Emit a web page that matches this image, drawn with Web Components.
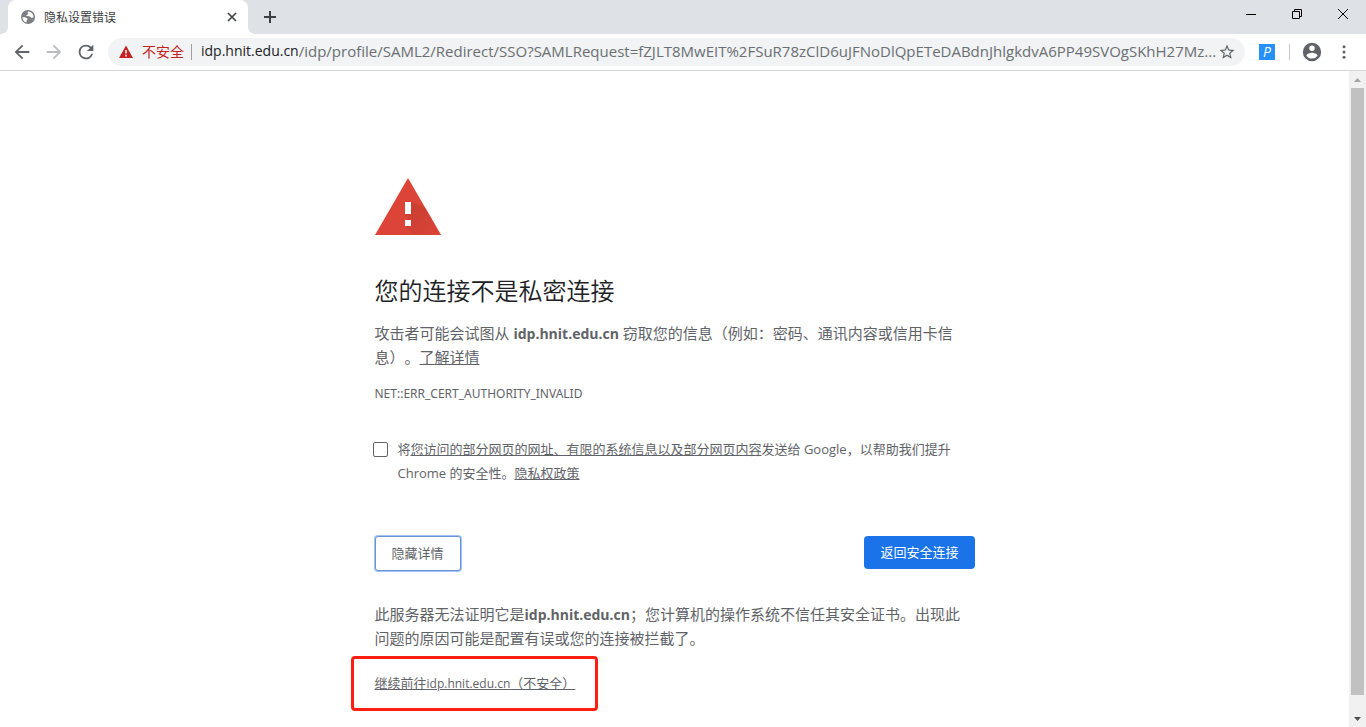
<!DOCTYPE html>
<html lang="zh-CN">
<head>
<meta charset="utf-8">
<title>隐私设置错误</title>
<style>
  body {
    margin: 0;
    background: #fff;
    color: #5f6368;
    font-family: "Open Sans", "Noto Sans CJK SC", sans-serif;
    text-spacing-trim: space-all;
  }
</style>
</head>
<body>
<browser-window>
  <tab-strip slot="top">隐私设置错误</tab-strip>
  <tool-bar slot="top" domain="idp.hnit.edu.cn" path="/idp/profile/SAML2/Redirect/SSO?SAMLRequest=fZJLT8MwEIT%2FSuR78zClD6uJFNoDlQpETeDABdnJhlgkdvA6PP49SVOgSKhH27Mz..."></tool-bar>
  <privacy-error></privacy-error>
  <scroll-bar slot="side"></scroll-bar>
</browser-window>

<script>
class BrowserWindow extends HTMLElement {
  connectedCallback() {
    this.attachShadow({ mode: 'open' });
    this.shadowRoot.innerHTML = `
      <style>
        :host {
          display: flex;
          flex-direction: column;
          height: 100vh;
        }
        .view {
          display: flex;
          flex: 1;
          min-height: 0;
        }
        main {
          flex: 1;
          min-width: 0;
          overflow: hidden;
        }
      </style>
      <slot name="top"></slot>
      <div class="view">
        <main><slot></slot></main>
        <slot name="side"></slot>
      </div>
    `;
  }
}

class TabStrip extends HTMLElement {
  connectedCallback() {
    this.attachShadow({ mode: 'open' });
    this.shadowRoot.innerHTML = `
      <style>
        :host {
          display: flex;
          height: 34px;
          background: #dee1e6;
          padding-left: 8px;
          color: #3c4043;
        }
        .tab {
          position: relative;
          box-sizing: border-box;
          width: 240px;
          display: flex;
          align-items: center;
          gap: 8px;
          padding: 0 8px 0 12px;
          background: #fff;
          border-radius: 8px 8px 0 0;
          font-size: 12px;
        }
        /* curved feet of the active tab */
        .tab::before, .tab::after {
          content: "";
          position: absolute;
          bottom: 0;
          width: 8px;
          height: 8px;
        }
        .tab::before {
          left: -8px;
          background: radial-gradient(circle at 0 0, transparent 8px, #fff 8px);
        }
        .tab::after {
          right: -8px;
          background: radial-gradient(circle at 100% 0, transparent 8px, #fff 8px);
        }
        .title { flex: 1; }
        button {
          display: flex;
          align-items: center;
          justify-content: center;
          border: 0;
          padding: 0;
          background: none;
          color: inherit;
        }
        .close { width: 16px; height: 16px; }
        .new { width: 28px; margin-left: 8px; }
        .controls { display: flex; margin-left: auto; color: #000; }
        .controls button { width: 46px; height: 28px; }
      </style>
      <div class="tab">
        <svg width="16" height="16" viewBox="0 0 16 16">
          <circle cx="8" cy="8" r="7" fill="#7b7e82"/>
          <path d="M2.5 8.2 C4 8 6.4 8.2 7.4 9.4 C8 10.4 6.4 10.8 6.6 12 L6.5 13.6 C4 13 2.4 11 2.5 8.2Z" fill="#fff"/>
          <path d="M8.6 2.5 C7 3 7.2 4.4 8.4 4.6 C8 6 6.2 5.6 6.2 7 C8 7.4 9.6 6.8 10.6 8 C11.2 9.2 12.2 9 13.5 8.2 C13.5 5.2 11.4 2.8 8.6 2.5Z" fill="#fff"/>
        </svg>
        <span class="title"><slot></slot></span>
        <button class="close" aria-label="关闭标签页">
          <svg width="10" height="10" viewBox="0 0 10 10" stroke="currentColor" stroke-width="1.600"><path d="M1 1l8 8M9 1l-8 8"/></svg>
        </button>
      </div>
      <button class="new" aria-label="新标签页">
        <svg width="12" height="12" viewBox="0 0 12 12" stroke="currentColor" stroke-width="2"><path d="M6 0v12M0 6h12"/></svg>
      </button>
      <div class="controls">
        <button aria-label="最小化">
          <svg width="10" height="10" viewBox="0 0 10 10"><path d="M0 5h10v1H0z"/></svg>
        </button>
        <button aria-label="还原">
          <svg width="10" height="10" viewBox="0 0 10 10" fill="none" stroke="#000"><path d="M.5 2.5h7v7h-7zM2.5 2V.5h7v7H8"/></svg>
        </button>
        <button aria-label="关闭">
          <svg width="10" height="10" viewBox="0 0 10 10" stroke="#000"><path d="M0 0l10 10M10 0L0 10"/></svg>
        </button>
      </div>
    `;
  }
}

class ToolBar extends HTMLElement {
  connectedCallback() {
    this.attachShadow({ mode: 'open' });
    this.shadowRoot.innerHTML = `
      <style>
        :host {
          display: flex;
          align-items: center;
          height: 36px;
          padding: 0 8px;
          background: #fff;
          border-bottom: 1px solid #d5d7da;
          color: #5f6368;
        }
        svg { fill: currentColor; flex: none; }
        button {
          display: flex;
          align-items: center;
          justify-content: center;
          width: 28px;
          height: 28px;
          border: 0;
          padding: 0;
          background: none;
          color: inherit;
        }
        nav, .menu { display: flex; gap: 4px; }
        .forward { color: #babcbe; }
        .omnibox {
          flex: 1;
          min-width: 0;
          display: flex;
          align-items: center;
          height: 28px;
          margin: 0 8px;
          padding: 0 9px 0 10px;
          border-radius: 14px;
          background: #f1f3f4;
          font-size: 14px;
        }
        .warning { color: #c5221f; }
        .state {
          margin-left: 8px;
          padding-right: 7px;
          border-right: 1px solid #9aa0a6;
          line-height: 16px;
          color: #c5221f;
        }
        label, input {
          font: 15px/20px "Open Sans", sans-serif;
          padding: 0 0 2px;
        }
        label {
          margin-left: 9px;
          font-size: 14px;
          color: #202124;
        }
        input {
          flex: 1;
          min-width: 0;
          border: 0;
          outline: 0;
          background: none;
          color: #6b6f73;
        }
        .star { width: 18px; }
        .extension {
          width: 16px;
          height: 16px;
          background: #2490f8;
          color: #fff;
          font: italic 14px/16px "Open Sans", sans-serif;
          text-align: center;
        }
        .rule {
          width: 1px;
          height: 16px;
          margin: 0 8px;
          background: #c8cacd;
        }
      </style>
      <nav>
        <button aria-label="后退"><svg width="22" height="22" viewBox="0 0 24 24"><path d="M20 11H7.83l5.59-5.59L12 4l-8 8 8 8 1.41-1.41L7.83 13H20z"/></svg></button>
        <button class="forward" aria-label="前进"><svg width="22" height="22" viewBox="0 0 24 24"><path d="M12 4l-1.41 1.41L16.17 11H4v2h12.17l-5.58 5.59L12 20l8-8z"/></svg></button>
        <button aria-label="重新加载"><svg width="22" height="22" viewBox="0 0 24 24"><path d="M17.65 6.35A7.96 7.96 0 0 0 12 4a8 8 0 1 0 7.73 10h-2.08A6 6 0 1 1 12 6c1.66 0 3.14.69 4.22 1.78L13 11h7V4z"/></svg></button>
      </nav>
      <div class="omnibox">
        <svg class="warning" width="16" height="16" viewBox="0 0 16 16"><path fill-rule="evenodd" d="M8 1.500L15 14H1zM7.200 6v3.500h1.600V6zM7.200 10.800v1.600h1.600v-1.600z"/></svg>
        <span class="state">不安全</span>
        <label for="url">${this.getAttribute('domain')}</label>
        <input id="url" type="text" value="${this.getAttribute('path')}">
        <button class="star" aria-label="收藏"><svg width="18" height="18" viewBox="0 0 24 24"><path d="M22 9.240l-7.190-.62L12 2 9.190 8.630 2 9.240l5.460 4.730L5.820 21 12 17.270 18.180 21l-1.630-7.030zM12 15.400l-3.760 2.270 1-4.280-3.320-2.880 4.380-.38L12 6.100l1.710 4.040 4.380.38-3.320 2.880 1 4.280z"/></svg></button>
      </div>
      <button aria-label="扩展程序"><span class="extension">P</span></button>
      <span class="rule"></span>
      <div class="menu">
        <button aria-label="用户"><svg width="22" height="22" viewBox="0 0 24 24"><path d="M12 2a10 10 0 1 0 0 20 10 10 0 0 0 0-20zm0 3a3 3 0 1 1 0 6 3 3 0 0 1 0-6zm0 14.200a7.200 7.200 0 0 1-6-3.220c.03-1.990 4-3.080 6-3.080 1.990 0 5.970 1.090 6 3.080a7.200 7.200 0 0 1-6 3.220z"/></svg></button>
        <button aria-label="菜单"><svg width="18" height="18" viewBox="0 0 24 24"><circle cx="12" cy="5" r="2"/><circle cx="12" cy="12" r="2"/><circle cx="12" cy="19" r="2"/></svg></button>
      </div>
    `;
  }
}

class ScrollBar extends HTMLElement {
  connectedCallback() {
    this.attachShadow({ mode: 'open' });
    this.shadowRoot.innerHTML = `
      <style>
        :host {
          display: flex;
          flex-direction: column;
          width: 17px;
          background: #f1f1f1;
        }
        svg { display: block; flex: none; }
        .track { flex: 1; padding: 0 2px; }
        .thumb { height: calc(100% - 15px); background: #c1c1c1; }
      </style>
      <svg width="17" height="17" viewBox="0 0 17 17"><path d="M5 11h7L8.500 7z" fill="#a3a3a3"/></svg>
      <div class="track"><div class="thumb"></div></div>
      <svg width="17" height="17" viewBox="0 0 17 17"><path d="M5 7h7l-3.500 4z" fill="#505050"/></svg>
    `;
  }
}

class PrivacyError extends HTMLElement {
  connectedCallback() {
    this.attachShadow({ mode: 'open' });
    this.shadowRoot.innerHTML = `
      <style>
        :host {
          display: block;
          box-sizing: border-box;
          max-width: 600px;
          margin: 0 auto;
          padding-top: 92px;
          font-size: 15px;
          line-height: 24px;
        }
        .icon { display: block; margin-bottom: 40px; }
        h1 {
          margin: 0 0 14px;
          font-size: 24px;
          font-weight: 350;
          line-height: 32px;
          color: #202124;
        }
        p { margin: 0; }
        strong { font-size: 14px; line-height: 1; }
        a { color: inherit; text-decoration: underline; }
        .small { font-size: 13px; }
        .code { margin-top: 13px; font-family: "Noto Sans", sans-serif; font-size: 12px; }
        .report {
          display: flex;
          gap: 10px;
          margin-top: 31px;
        }
        .report input {
          appearance: none;
          flex: none;
          box-sizing: border-box;
          width: 15px;
          height: 15px;
          margin: 5px 0 0 -2px;
          border: 1px solid #5f6368;
          border-radius: 2px;
          background: #fff;
        }
        .buttons {
          display: flex;
          justify-content: space-between;
          align-items: flex-start;
          margin: 51px 0 31px;
        }
        button {
          padding: 0 16px;
          border: 0;
          border-radius: 4px;
          font: inherit;
          font-size: 13px;
          line-height: 33px;
        }
        .details {
          border: 1px solid #6a93d4;
          border-radius: 3px;
          background: #fff;
          color: #5f6368;
          box-shadow: 0 0 0 1px #a3c3f8;
        }
        .safe { background: #1a73e8; color: #fff; }
        .proceed {
          position: relative;
          width: fit-content;
          margin-top: 21px;
        }
        .host { font-size: 12px; line-height: 1; }
        /* red marker round the proceed link */
        .proceed::after {
          content: "";
          position: absolute;
          inset: -15px -23px -16px -24px;
          border: 3px solid #ff1f10;
          border-radius: 4px;
          pointer-events: none;
        }
      </style>
      <svg class="icon" width="72" height="72" viewBox="0 0 72 72">
        <defs>
          <linearGradient id="shade" x1="0" y1="0" x2="1" y2="1">
            <stop offset="0" stop-color="#b93a2f"/>
            <stop offset="1" stop-color="#db4437"/>
          </linearGradient>
        </defs>
        <path d="M33 15L66 72H0z" fill="#db4437"/>
        <path d="M36 39l14.500 6L66 72H39.500L30 63l5-5-5-7z" fill="url(#shade)" opacity=".6"/>
        <path d="M30 39h6v12h-6zM30 57h6v6h-6z" fill="#fff"/>
      </svg>
      <h1>您的连接不是私密连接</h1>
      <p>攻击者可能会试图从 <strong>idp.hnit.edu.cn</strong> 窃取您的信息（例如：密码、通讯内容或信用卡信息）。<a href="#">了解详情</a></p>
      <p class="code">NET::ERR_CERT_AUTHORITY_INVALID</p>
      <div class="report small">
        <input type="checkbox" id="send">
        <label for="send">将<a href="#">您访问的部分网页的网址、有限的系统信息以及部分网页内容</a>发送给 Google，以帮助我们提升 Chrome 的安全性。<a href="#">隐私权政策</a></label>
      </div>
      <div class="buttons">
        <button class="details">隐藏详情</button>
        <button class="safe">返回安全连接</button>
      </div>
      <p>此服务器无法证明它是<strong>idp.hnit.edu.cn</strong>；您计算机的操作系统不信任其安全证书。出现此问题的原因可能是配置有误或您的连接被拦截了。</p>
      <p class="proceed small"><a href="#">继续前往<span class="host">idp.hnit.edu.cn</span>（不安全）</a></p>
    `;
  }
}

customElements.define('browser-window', BrowserWindow);
customElements.define('tab-strip', TabStrip);
customElements.define('tool-bar', ToolBar);
customElements.define('scroll-bar', ScrollBar);
customElements.define('privacy-error', PrivacyError);
</script>
</body>
</html>
